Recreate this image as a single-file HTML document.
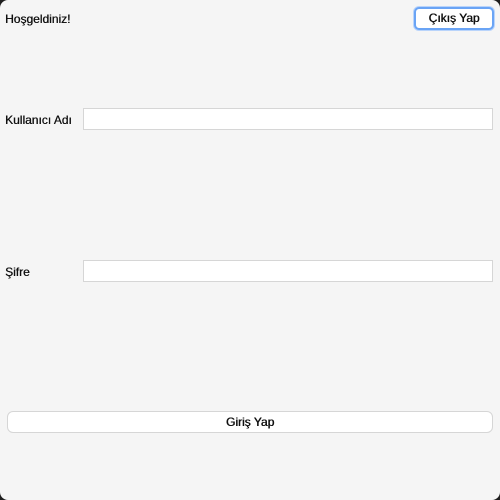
<!DOCTYPE html>
<html><head><meta charset="utf-8"><style>
html,body{margin:0;padding:0;width:500px;height:500px;background:#1e1e1e;overflow:hidden}
#w{position:absolute;left:0;top:0;width:500px;height:500px;background:#f5f5f5;border-radius:8px;font-family:"Liberation Sans","DejaVu Sans",sans-serif;font-size:12px;color:#111;text-shadow:0.35px 0 0 #111}
.t{position:absolute;white-space:nowrap}
.in{position:absolute;background:#fff;border:1px solid #d6d6d6;box-sizing:border-box}
.btn{position:absolute;background:#fff;box-sizing:border-box;text-align:center;font-size:12px;text-shadow:0.5px 0 0 #111}
</style></head><body><div id="w">
<div class="t" style="left:5px;top:12px">Hoşgeldiniz!</div>
<div class="btn" style="left:414px;top:7px;width:80px;height:23px;border:2px solid #6aa4f5;border-radius:5px;line-height:19px;box-shadow:0 0 0 1px #b9d4fb">Çıkış Yap</div>
<div class="t" style="left:5px;top:113px">Kullanıcı Adı</div>
<div class="in" style="left:83px;top:108px;width:410px;height:22px"></div>
<div class="t" style="left:5px;top:265px">Şifre</div>
<div class="in" style="left:83px;top:260px;width:410px;height:22px"></div>
<div class="btn" style="left:7px;top:411px;width:486px;height:22px;border:1px solid #d6d6d6;border-radius:6px;line-height:20px">Giriş Yap</div>
</div></body></html>
